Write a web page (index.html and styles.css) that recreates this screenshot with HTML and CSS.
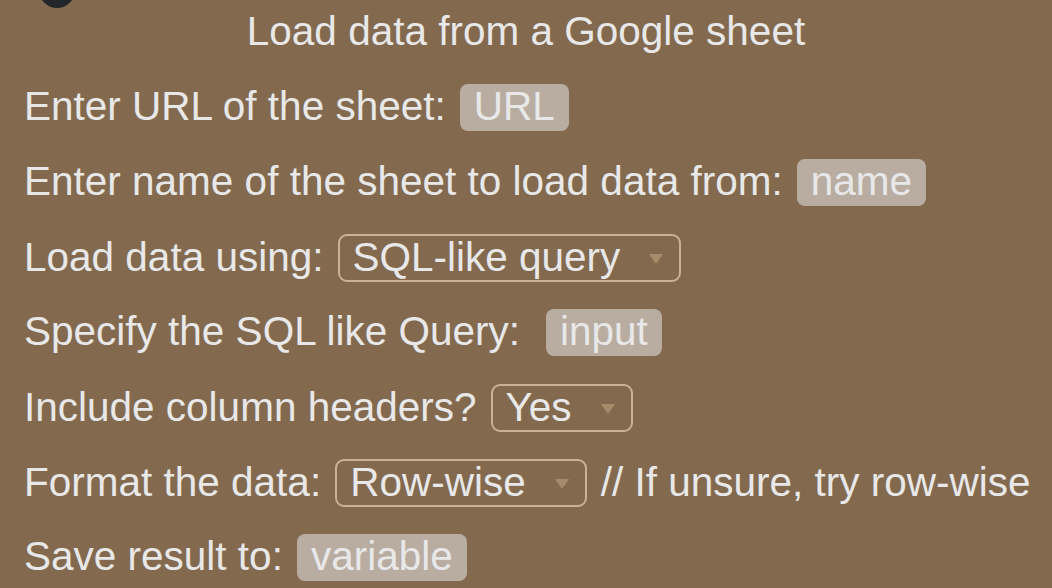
FILE: index.html
```html
<!DOCTYPE html>
<html>
<head>
<meta charset="utf-8">
<link rel="stylesheet" href="styles.css">
</head>
<body>
<div class="block">
  <span class="notch"></span>
  <div class="row title">Load data from a Google sheet</div>
  <div class="row"><span>Enter URL of the sheet:</span><span class="pill">URL</span></div>
  <div class="row"><span>Enter name of the sheet to load data from:</span><span class="pill">name</span></div>
  <div class="row"><span>Load data using:</span><span class="drop">SQL-like query<i class="arrow"></i></span></div>
  <div class="row"><span class="wide">Specify the SQL like Query:</span><span class="pill">input</span></div>
  <div class="row"><span>Include column headers?</span><span class="drop">Yes<i class="arrow"></i></span></div>
  <div class="row"><span>Format the data:</span><span class="drop">Row-wise<i class="arrow"></i></span><span>// If unsure, try row-wise</span></div>
  <div class="row"><span>Save result to:</span><span class="pill">variable</span></div>
</div>
</body>
</html>
```
FILE: styles.css
```css
html, body {
  margin: 0;
  padding: 0;
  background: #836a4f;
}
.block {
  position: relative;
  width: 1052px;
  height: 588px;
  box-sizing: border-box;
  padding: 9px 0 0 24px;
  display: flex;
  flex-direction: column;
  gap: 27px;
  font-family: "Liberation Sans", Arial, sans-serif;
  font-size: 40.5px;
  color: #e8e8e9;
  overflow: hidden;
}
.notch {
  position: absolute;
  left: 39px;
  top: -28px;
  width: 36px;
  height: 36px;
  border-radius: 50%;
  background: #24272a;
}
.row {
  height: 48px;
  display: flex;
  align-items: baseline;
  gap: 14px;
  line-height: 45px;
  white-space: nowrap;
}
.title {
  justify-content: center;
  margin-left: -24px;
}
.wide {
  margin-right: 12px;
}
.pill {
  display: inline-block;
  background: #b9ada1;
  border-radius: 8px;
  padding: 0 14px 2px;
  line-height: 45px;
}
.drop {
  display: inline-flex;
  align-items: center;
  border: 2px solid #c9b298;
  border-radius: 9px;
  padding: 0 16px 1px 13px;
  line-height: 43px;
}
.arrow {
  display: inline-block;
  width: 0;
  height: 0;
  margin-left: 29px;
  margin-top: 2px;
  border-left: 7px solid transparent;
  border-right: 7px solid transparent;
  border-top: 10px solid #a88b6b;
}
```
